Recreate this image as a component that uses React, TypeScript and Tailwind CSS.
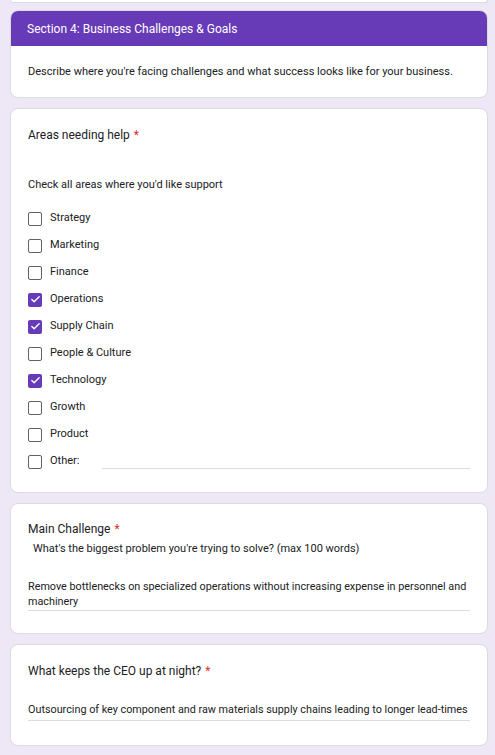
import { Check } from 'lucide-react';

const areas = [
  { label: 'Strategy', checked: false },
  { label: 'Marketing', checked: false },
  { label: 'Finance', checked: false },
  { label: 'Operations', checked: true },
  { label: 'Supply Chain', checked: true },
  { label: 'People & Culture', checked: false },
  { label: 'Technology', checked: true },
  { label: 'Growth', checked: false },
  { label: 'Product', checked: false },
];

function Box({ checked }: { checked: boolean }) {
  if (checked) {
    return (
      <span className="flex h-[14px] w-[14px] items-center justify-center rounded-[2px] bg-[#673ab7]">
        <Check className="h-[11px] w-[11px] text-white" strokeWidth={3} />
      </span>
    );
  }
  return <span className="h-[14px] w-[14px] rounded-[2px] border-[1.5px] border-[#5f6368] bg-white" />;
}

function Required() {
  return <span className="ml-1 text-[#d93025]">*</span>;
}

export default function App() {
  return (
    <div
      className="min-h-[755px] w-[495px] bg-[#ede7f6] text-[#202124]"
      style={{ fontFamily: 'Roboto, "Liberation Sans", sans-serif' }}
    >
      {/* tail of the previous card */}
      <div className="ml-[10px] h-[3px] w-[478px] rounded-b-lg border-x border-b border-[#dadce0] bg-white" />

      {/* Section header */}
      <div className="ml-[10px] mt-[7px] w-[478px] overflow-hidden rounded-lg border border-[#dadce0] bg-white">
        <div className="flex h-[35px] items-center bg-[#673ab7] px-[16px] text-[12px] text-white">
          Section 4: Business Challenges &amp; Goals
        </div>
        <p className="px-[17px] pb-[17px] pt-[18px] text-[11px] leading-[16px]">
          Describe where you're facing challenges and what success looks like for your business.
        </p>
      </div>

      {/* Areas needing help */}
      <div className="ml-[10px] mt-[10px] w-[478px] rounded-lg border border-[#dadce0] bg-white px-[17px] pb-[17px] pt-[17px]">
        <h2 className="text-[12px] leading-[18px]">
          Areas needing help<Required />
        </h2>
        <p className="mt-[33px] text-[11px] leading-[16px]">Check all areas where you'd like support</p>
        <div className="mt-[12px] flex flex-col">
          {areas.map((a) => (
            <div key={a.label} className="flex h-[27px] items-center gap-[8px] text-[11px]">
              <Box checked={a.checked} />
              <span>{a.label}</span>
            </div>
          ))}
          <div className="flex h-[27px] items-center gap-[8px] text-[11px]">
            <Box checked={false} />
            <span className="w-[44px]">Other:</span>
            <div className="mt-[14px] h-px flex-1 bg-[#dadce0]" />
          </div>
        </div>
      </div>

      {/* Main challenge */}
      <div className="ml-[10px] mt-[10px] w-[478px] rounded-lg border border-[#dadce0] bg-white px-[17px] pb-[22px] pt-[16px]">
        <h2 className="text-[12px] leading-[18px]">
          Main Challenge<Required />
        </h2>
        <p className="mt-[3px] pl-[5px] text-[11px] leading-[16px]">
          What's the biggest problem you're trying to solve? (max 100 words)
        </p>
        <p className="mt-[22px] border-b border-[#dadce0] pb-[1px] text-[10.8px] leading-[15px]">
          Remove bottlenecks on specialized operations without increasing expense in personnel and machinery
        </p>
      </div>

      {/* CEO question */}
      <div className="ml-[10px] mt-[10px] w-[478px] rounded-lg border border-[#dadce0] bg-white px-[17px] pb-[24px] pt-[17px]">
        <h2 className="text-[12px] leading-[18px]">
          What keeps the CEO up at night?<Required />
        </h2>
        <p className="mt-[22px] whitespace-nowrap border-b border-[#dadce0] pb-[3px] text-[10.8px] leading-[15px]">
          Outsourcing of key component and raw materials supply chains leading to longer lead-times
        </p>
      </div>
    </div>
  );
}
